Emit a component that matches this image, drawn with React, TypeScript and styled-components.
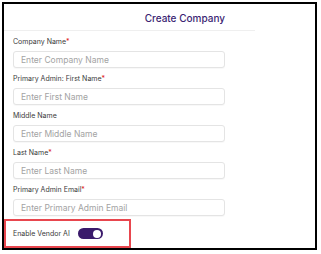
import React from "react";
import styled, {createGlobalStyle} from "styled-components";

const GlobalStyle = createGlobalStyle`
  body {
    margin: 0;
    background: #fff;
    font-family: Inter, "Noto Sans", sans-serif;
  }
`;

interface Field {
  label: string;
  placeholder: string;
  required?: boolean;
}

const FIELDS: Field[] = [
  {label: "Company Name", placeholder: "Enter Company Name", required: true},
  {label: "Primary Admin: First Name", placeholder: "Enter First Name", required: true},
  {label: "Middle Name", placeholder: "Enter Middle Name"},
  {label: "Last Name", placeholder: "Enter Last Name", required: true},
  {label: "Primary Admin Email", placeholder: "Enter Primary Admin Email", required: true}
];

export default function App() {
  return (
    <>
      <GlobalStyle />
      <Frame>
        <Header>
          <Title>Create Company</Title>
        </Header>
        <Form>
          {FIELDS.map(field => (
            <FieldWrap key={field.label}>
              <Label>
                {field.label}
                {field.required && <Star>*</Star>}
              </Label>
              <Input placeholder={field.placeholder} />
            </FieldWrap>
          ))}
        </Form>
        <Highlight>
          <ToggleLabel>Enable Vendor AI</ToggleLabel>
          <Toggle $on>
            <Knob />
          </Toggle>
        </Highlight>
      </Frame>
    </>
  );
}

const Frame = styled.div`
  box-sizing: border-box;
  margin: 2px;
  width: 315px;
  height: 248px;
  border: 2px solid #000;
  display: flex;
  flex-direction: column;
`;

const Header = styled.div`
  box-sizing: border-box;
  width: 251px;
  height: 28px;
  border-bottom: 1px solid #efefef;
  display: flex;
  align-items: center;
  justify-content: flex-end;
  padding-right: 30px;
`;

const Title = styled.div`
  font-size: 10px;
  font-weight: 500;
  color: #3b1f73;
  margin-top: 2px;
`;

const Form = styled.div`
  display: flex;
  flex-direction: column;
  gap: 6px;
  padding: 6px 0 0 9px;
`;

const FieldWrap = styled.div`
  display: flex;
  flex-direction: column;
  gap: 4px;
`;

const Label = styled.div`
  font-size: 7px;
  line-height: 10px;
  color: #3a3a3a;
`;

const Star = styled.span`
  color: #e02020;
`;

const Input = styled.input`
  box-sizing: border-box;
  width: 212px;
  height: 17px;
  border: 1px solid #e4e4e4;
  border-radius: 3px;
  padding: 0 7px;
  font-family: inherit;
  font-size: 8.5px;
  color: #333;
  outline: none;
  box-shadow: 0 1px 1px rgba(0, 0, 0, 0.03);

  &::placeholder {
    color: #a3a3a3;
  }
`;

const Highlight = styled.div`
  box-sizing: border-box;
  margin-top: 3px;
  width: 127px;
  height: 29px;
  border: 2px solid #e8464e;
  display: flex;
  align-items: center;
  gap: 8px;
  padding-left: 7px;
`;

const ToggleLabel = styled.span`
  font-size: 7px;
  color: #3a3a3a;
`;

const Toggle = styled.div<{$on?: boolean}>`
  box-sizing: border-box;
  width: 25px;
  height: 11px;
  border-radius: 6px;
  background: ${p => (p.$on ? "#3a1a6b" : "#ccc")};
  display: flex;
  align-items: center;
  justify-content: ${p => (p.$on ? "flex-end" : "flex-start")};
  padding: 0 1.5px;
`;

const Knob = styled.div`
  width: 8px;
  height: 8px;
  border-radius: 50%;
  background: #fff;
`;
